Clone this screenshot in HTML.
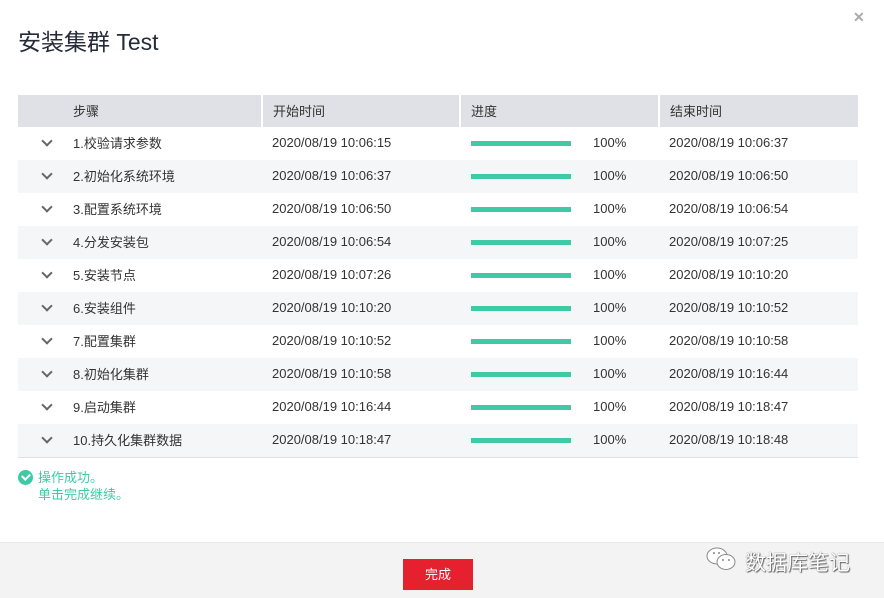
<!DOCTYPE html>
<html><head><meta charset="utf-8"><style>
*{margin:0;padding:0;box-sizing:border-box}
body{width:884px;height:598px;background:#fff;font-family:"Liberation Sans","Noto Sans CJK SC",sans-serif;color:#333;position:relative;overflow:hidden}
.title{position:absolute;left:18px;top:23px;font-size:23px;color:#252b3a}
.close{position:absolute;left:853px;top:9px;font-size:14px;font-weight:bold;color:#aaa}
table{position:absolute;left:18px;top:95px;width:840px;border-collapse:collapse;font-size:13px}
th{background:#dfe1e6;height:32px;text-align:left;font-weight:normal;padding-left:10px;border-left:2px solid #fff;padding-bottom:2px}
th:first-child{border-left:none}
td{height:33px;padding-left:10px;padding-bottom:2px}
tr:nth-child(odd) td{background:#f5f6f7}
tr:last-child td{border-bottom:1px solid #dfe1e6}
.bar{display:inline-block;width:100px;height:5px;background:#3fc9a5;vertical-align:middle;margin-right:22px;margin-left:1px}
.arr{display:inline-block;width:8px;height:8px;border-right:2px solid #666;border-bottom:2px solid #666;transform:rotate(45deg);margin:-7px 0 0 5px;vertical-align:middle}
.ok{position:absolute;left:18px;top:469px;font-size:13px;color:#3fc9a5;line-height:17px}
.ok i{position:absolute;left:0;top:1px;width:15px;height:15px;border-radius:50%;background:#3fc9a5}
.ok i:after{content:"";position:absolute;left:4px;top:3px;width:6px;height:4px;border-left:2px solid #fff;border-bottom:2px solid #fff;transform:rotate(-45deg)}
.foot{position:absolute;left:0;top:542px;width:884px;height:56px;background:#f3f3f3;border-top:1px solid #e8e8e8}
.btn{position:absolute;left:403px;top:16px;width:70px;height:31px;background:#e5202f;color:#fff;font-size:13px;text-align:center;line-height:31px}
.wm{position:absolute;left:745px;top:4px;font-size:21px;color:#fff;text-shadow:0 0 1px #555,1px 1px 1px #666}
</style></head><body>
<div class="title">安装集群 Test</div>
<div class="close">✕</div>
<table>
<tr><th style="width:244px;padding-left:55px">步骤</th><th style="width:198px">开始时间</th><th style="width:199px">进度</th><th>结束时间</th></tr>
<tr><td style="padding-left:20px"><span class="arr"></span><span style="margin-left:22px">1.校验请求参数</span></td><td>2020/08/19 10:06:15</td><td><span class="bar"></span>100%</td><td>2020/08/19 10:06:37</td></tr>
<tr><td style="padding-left:20px"><span class="arr"></span><span style="margin-left:22px">2.初始化系统环境</span></td><td>2020/08/19 10:06:37</td><td><span class="bar"></span>100%</td><td>2020/08/19 10:06:50</td></tr>
<tr><td style="padding-left:20px"><span class="arr"></span><span style="margin-left:22px">3.配置系统环境</span></td><td>2020/08/19 10:06:50</td><td><span class="bar"></span>100%</td><td>2020/08/19 10:06:54</td></tr>
<tr><td style="padding-left:20px"><span class="arr"></span><span style="margin-left:22px">4.分发安装包</span></td><td>2020/08/19 10:06:54</td><td><span class="bar"></span>100%</td><td>2020/08/19 10:07:25</td></tr>
<tr><td style="padding-left:20px"><span class="arr"></span><span style="margin-left:22px">5.安装节点</span></td><td>2020/08/19 10:07:26</td><td><span class="bar"></span>100%</td><td>2020/08/19 10:10:20</td></tr>
<tr><td style="padding-left:20px"><span class="arr"></span><span style="margin-left:22px">6.安装组件</span></td><td>2020/08/19 10:10:20</td><td><span class="bar"></span>100%</td><td>2020/08/19 10:10:52</td></tr>
<tr><td style="padding-left:20px"><span class="arr"></span><span style="margin-left:22px">7.配置集群</span></td><td>2020/08/19 10:10:52</td><td><span class="bar"></span>100%</td><td>2020/08/19 10:10:58</td></tr>
<tr><td style="padding-left:20px"><span class="arr"></span><span style="margin-left:22px">8.初始化集群</span></td><td>2020/08/19 10:10:58</td><td><span class="bar"></span>100%</td><td>2020/08/19 10:16:44</td></tr>
<tr><td style="padding-left:20px"><span class="arr"></span><span style="margin-left:22px">9.启动集群</span></td><td>2020/08/19 10:16:44</td><td><span class="bar"></span>100%</td><td>2020/08/19 10:18:47</td></tr>
<tr><td style="padding-left:20px"><span class="arr"></span><span style="margin-left:22px">10.持久化集群数据</span></td><td>2020/08/19 10:18:47</td><td><span class="bar"></span>100%</td><td>2020/08/19 10:18:48</td></tr>
</table>
<div class="ok"><i></i><div style="padding-left:20px">操作成功。<br>单击完成继续。</div></div>
<div class="foot"><div class="btn">完成</div><div class="wm">数据库笔记</div>
<svg style="position:absolute;left:704px;top:2px" width="36" height="30" viewBox="0 0 36 30"><ellipse cx="13" cy="11" rx="10" ry="8" fill="#fff" stroke="#888"/><ellipse cx="22" cy="17" rx="9" ry="7.5" fill="#fff" stroke="#888"/><circle cx="19" cy="15" r="1" fill="#888"/><circle cx="25" cy="15" r="1" fill="#888"/><circle cx="10" cy="8" r="1" fill="#888"/><circle cx="15" cy="8" r="1" fill="#888"/></svg>
</div>
</body></html>
